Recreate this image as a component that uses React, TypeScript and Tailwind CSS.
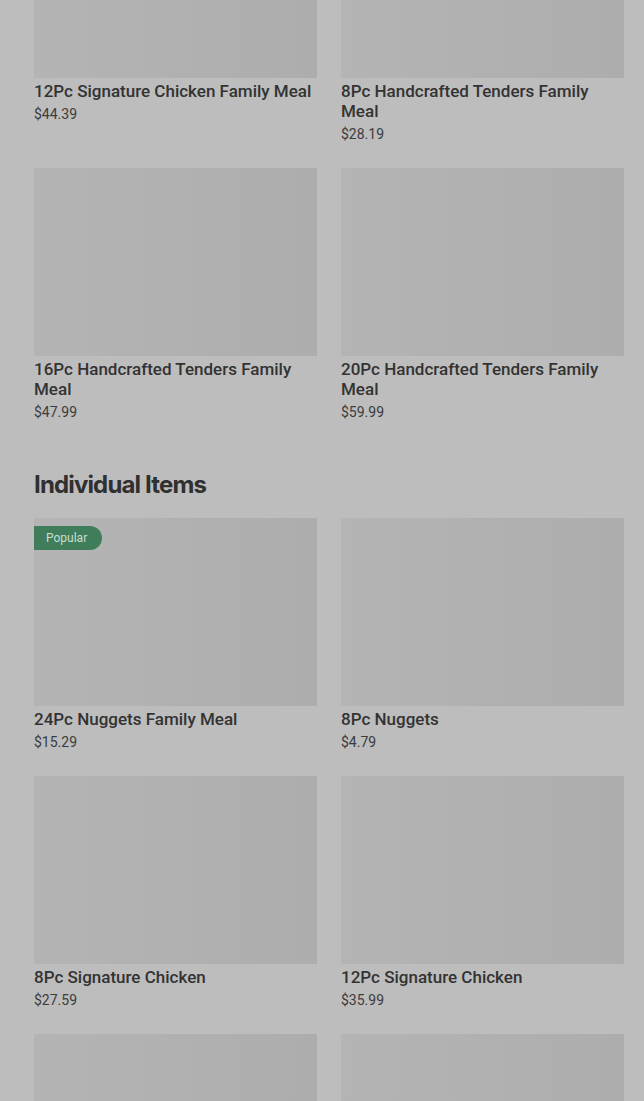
import React from 'react'

type Item = {
  name: string
  price: string
  popular?: boolean
}

const familyMeals: Item[] = [
  { name: '12Pc Signature Chicken Family Meal', price: '$44.39' },
  { name: '8Pc Handcrafted Tenders Family Meal', price: '$28.19' },
  { name: '16Pc Handcrafted Tenders Family Meal', price: '$47.99' },
  { name: '20Pc Handcrafted Tenders Family Meal', price: '$59.99' },
]

const individualItems: Item[] = [
  { name: '24Pc Nuggets Family Meal', price: '$15.29', popular: true },
  { name: '8Pc Nuggets', price: '$4.79' },
  { name: '8Pc Signature Chicken', price: '$27.59' },
  { name: '12Pc Signature Chicken', price: '$35.99' },
  { name: '4Pc Handcrafted Tenders', price: '$9.59' },
  { name: '6Pc Handcrafted Tenders', price: '$13.19' },
]

const ItemCard = ({ item }: { item: Item }) => (
  <div className="flex flex-col">
    {/* Image placeholder */}
    <div className="relative h-[188px] w-full bg-gradient-to-r from-[#b4b4b4] to-[#adadad]">
      {item.popular && (
        <span className="absolute left-0 top-2 flex h-6 items-center rounded-r-full bg-[#3f7d5b] pl-3 pr-[15px] text-[12px] text-[#c9ddd0]">
          Popular
        </span>
      )}
    </div>
    <h3 className="mt-[3px] text-[17px] font-medium leading-5 text-[#333333]">
      {item.name}
    </h3>
    <p className="mt-[3px] text-[14px] leading-5 text-[#3c3c3c]">{item.price}</p>
  </div>
)

export default function App() {
  return (
    <div
      className="h-[1101px] overflow-hidden bg-[#bdbdbd] pl-[34px] pr-5"
      style={{ fontFamily: 'Roboto, "Liberation Sans", sans-serif' }}
    >
      <div className="-mt-[110px]">
        <div className="grid grid-cols-2 gap-x-6 gap-y-6">
          {familyMeals.map((item) => (
            <ItemCard key={item.name} item={item} />
          ))}
        </div>

        <h2
          className="mb-[17px] mt-[47px] text-[24px] font-bold leading-8 tracking-[-0.85px] text-[#303030]"
          style={{ fontFamily: 'Inter, "Liberation Sans", sans-serif' }}
        >
          Individual Items
        </h2>

        <div className="grid grid-cols-2 gap-x-6 gap-y-6">
          {individualItems.map((item) => (
            <ItemCard key={item.name} item={item} />
          ))}
        </div>
      </div>
    </div>
  )
}
